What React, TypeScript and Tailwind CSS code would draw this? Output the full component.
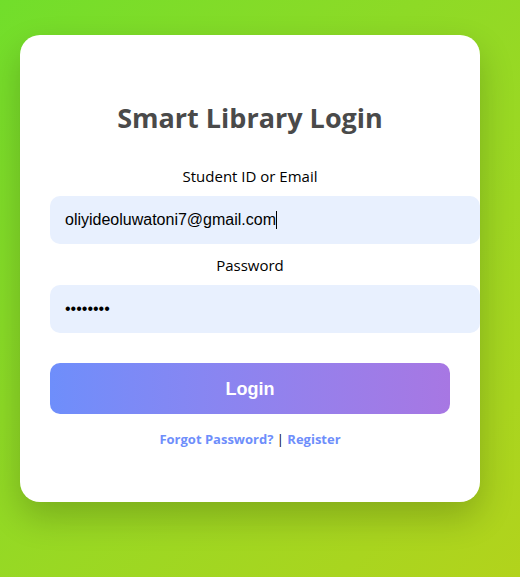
import { useState } from "react";

export default function App() {
  const [user, setUser] = useState("oliyideoluwatoni7@gmail.com");
  const [password, setPassword] = useState("password");
  const field =
    "block h-12 w-full rounded-[10px] bg-[#e8f0fe] px-[15px] font-['Liberation_Sans',Arial,sans-serif] text-base text-black caret-transparent outline-none";

  return (
    <main className="flex min-h-screen items-start justify-center bg-linear-135 from-[#71de2b] to-[#b2d31c] pt-[35px] pr-10 pb-[75px] pl-5 font-['Open_Sans',sans-serif] text-black">
      <section className="w-full max-w-[460px] rounded-[20px] bg-white px-[30px] pt-16 pb-[53px] text-center shadow-[0_15px_35px_rgba(0,0,0,0.2)]">
        <h1 className="mb-[29px] text-[27px] leading-[38px] font-bold text-[#4a4a4a]">
          Smart Library Login
        </h1>
        <form onSubmit={(event) => event.preventDefault()}>
          <label htmlFor="user" className="block text-[15px] leading-5">
            Student ID or Email
          </label>
          <div className="relative mt-2.5 -mr-[30px]">
            <input
              id="user"
              type="text"
              autoFocus
              value={user}
              onChange={(event) => setUser(event.target.value)}
              className={field}
            />
            <div
              aria-hidden="true"
              className="pointer-events-none absolute top-[15px] left-[226px] h-[18px] w-px bg-black"
            />
          </div>
          <label htmlFor="password" className="mt-[11px] block text-[15px] leading-5">
            Password
          </label>
          <div className="mt-2.5 -mr-[30px]">
            <input
              id="password"
              type="password"
              value={password}
              onChange={(event) => setPassword(event.target.value)}
              className={field}
            />
          </div>
          <button
            type="submit"
            className="mt-[30px] h-[51px] w-full rounded-[10px] bg-linear-to-r from-[#6e8efb] to-[#a777e3] font-['Liberation_Sans',Arial,sans-serif] text-lg font-bold text-white"
          >
            Login
          </button>
        </form>
        <p className="mt-[15px] text-[13px] leading-5">
          <a href="#forgot" className="font-bold text-[#6e8efb]">
            Forgot Password?
          </a>{" "}
          |{" "}
          <a href="#register" className="font-bold text-[#6e8efb]">
            Register
          </a>
        </p>
      </section>
    </main>
  );
}
